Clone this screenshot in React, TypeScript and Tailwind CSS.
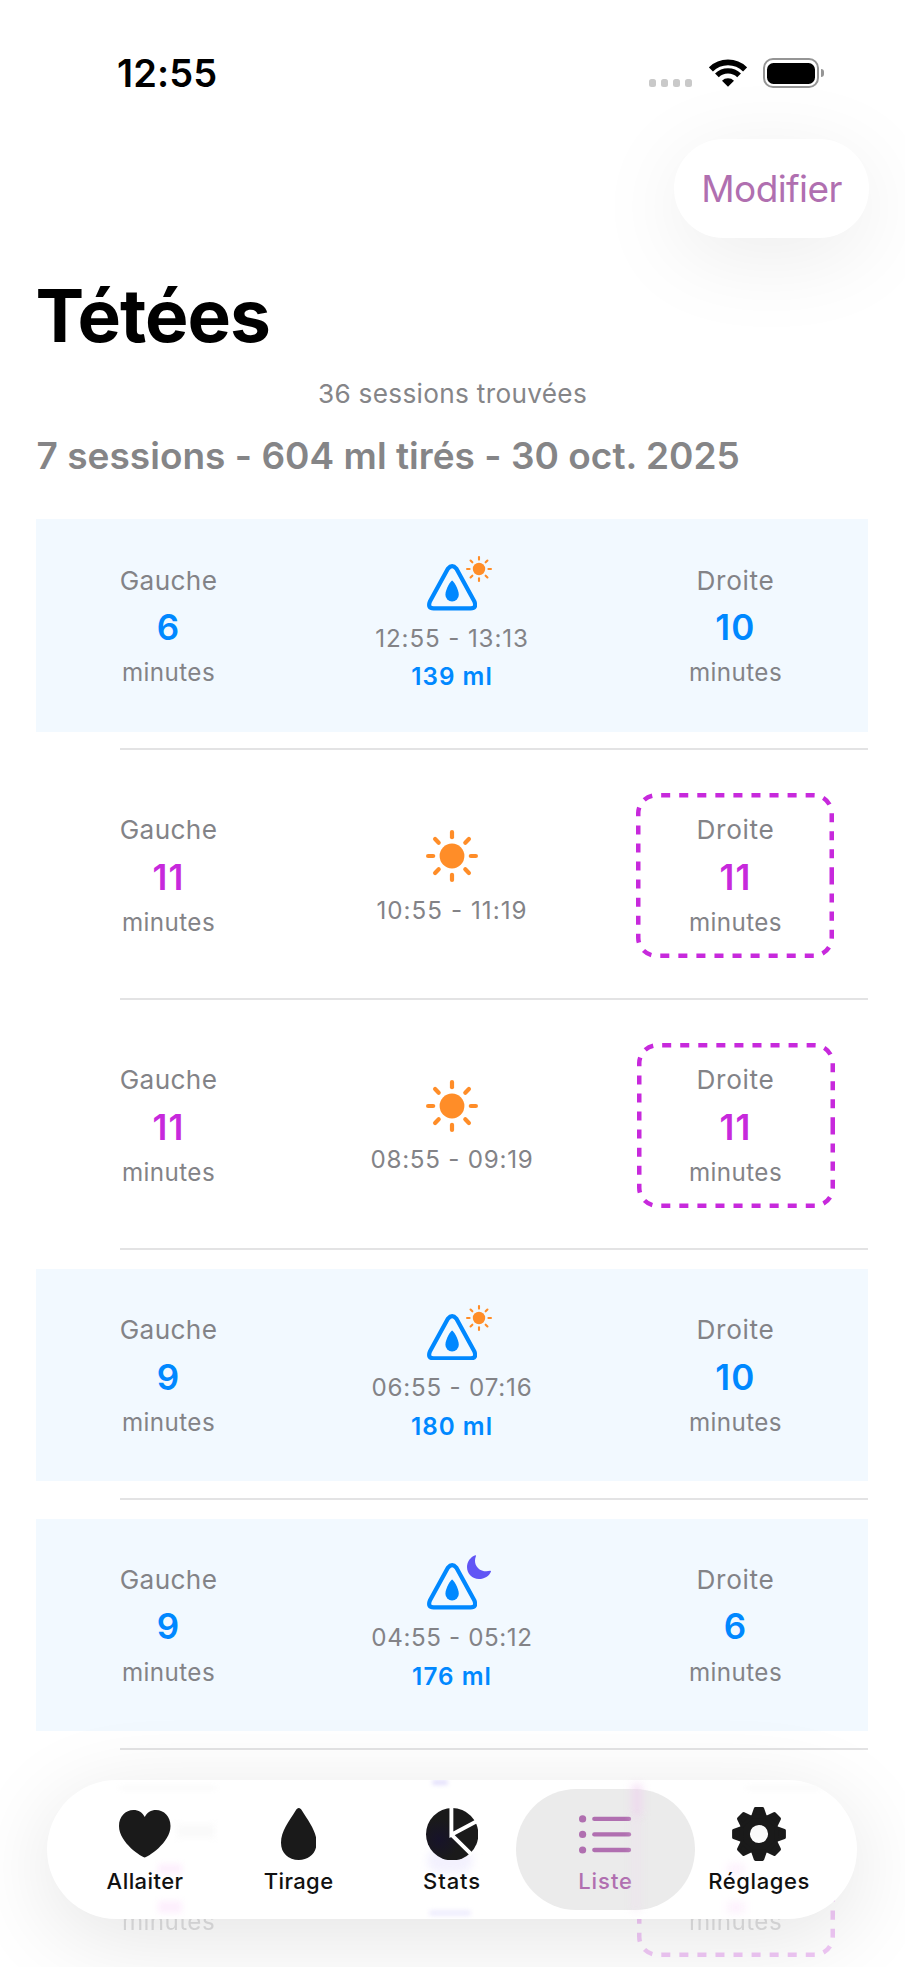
import React from "react";

type Session = {
  left?: number;
  right?: number;
  time?: string;
  tracking?: string;
  volume?: string;
  night?: boolean;
  faded?: boolean;
};

const sessions: Session[] = [
  { left: 6, right: 10, time: "12:55 - 13:13", tracking: "tracking-[0.87px]", volume: "139 ml" },
  { left: 11, right: 11, time: "10:55 - 11:19", tracking: "tracking-[1.03px]" },
  { left: 11, right: 11, time: "08:55 - 09:19", tracking: "tracking-[0.75px]" },
  { left: 9, right: 10, time: "06:55 - 07:16", tracking: "tracking-[0.79px]", volume: "180 ml" },
  { left: 9, right: 6, time: "04:55 - 05:12", tracking: "tracking-[0.6px]", volume: "176 ml", night: true },
  { night: true, faded: true },
];

const RAYS = [0, 45, 90, 135, 180, 225, 270, 315];

function Sun({ className }: { className: string }) {
  return (
    <svg viewBox="-26 -26 52 52" className={className}>
      <circle r="12.4" fill="#ff8d28" />
      {RAYS.map((a) => (
        <line key={a} x1="0" y1="-18.8" x2="0" y2="-23.9" stroke="#ff8d28" strokeWidth="4.2" strokeLinecap="round" transform={`rotate(${a})`} />
      ))}
    </svg>
  );
}

function Moon({ className }: { className: string }) {
  return (
    <svg viewBox="0 0 24 24" className={className}>
      <path
        d="M8.3 0.2C3.4 2 0 6.7 0 12.1C0 18.9 5.2 24 11.9 24C17.5 24 22.2 20.9 23.9 16.7C24.2 16 23.7 15.6 23.1 15.8C18.8 16.9 14.3 16.2 11.2 13.2C7.8 9.9 7.2 5.5 8.9 1.2C9.2 0.4 8.9 0 8.3 0.2Z"
        fill="#6155f5"
      />
    </svg>
  );
}

function PumpTriangle() {
  return (
    <svg viewBox="0 0 50.3 46.5" className="h-[46.5px] w-[50.3px]">
      <path
        d="M21 4.6Q25.15 -0.2 29.3 4.6L47.4 37.6Q50 44.3 43.7 44.3H6.6Q0.3 44.3 2.9 37.6Z"
        fill="none"
        stroke="#0088ff"
        strokeWidth="4.2"
        strokeLinejoin="round"
      />
      <path d="M25.1 16.6C23.9 16.6 18.4 25.5 18.4 30.7A6.7 6.7 0 0 0 31.8 30.7C31.8 25.5 26.3 16.6 25.1 16.6Z" fill="#0088ff" />
    </svg>
  );
}

function DashedFrame() {
  return (
    <svg viewBox="0 0 198 165" className="absolute inset-0 h-[165px] w-[198px]">
      <path
        d="M195.75 82.5V144.75A18 18 0 0 1 177.75 162.75H20.25A18 18 0 0 1 2.25 144.75V20.25A18 18 0 0 1 20.25 2.25H177.75A18 18 0 0 1 195.75 20.25Z"
        fill="none"
        stroke="#c729dc"
        strokeWidth="4.5"
        strokeDasharray="9.03 9.03"
      />
    </svg>
  );
}

function Side({ label, value, pumped, framed }: { label: string; value?: number; pumped: boolean; framed?: boolean }) {
  return (
    <div className="relative flex h-[165px] w-[198px] flex-col items-center pt-[21.5px] text-[#838387]">
      {framed && <DashedFrame />}
      <span className={`h-[32px] text-[26.2px] leading-[32px] ${label === "Droite" ? "tracking-[0.7px]" : "tracking-[0.38px]"}`}>
        {value !== undefined && label}
      </span>
      <span className={`mt-[9.5px] h-[42px] text-[35px] font-semibold leading-[42px] tracking-[1.2px] ${pumped ? "text-[#0088ff]" : "text-[#c729dc]"}`}>
        {value}
      </span>
      <span className="mt-[10.2px] text-[24.2px] leading-[30px] tracking-[0.43px]">minutes</span>
    </div>
  );
}

function SessionRow({ s }: { s: Session }) {
  const pumped = Boolean(s.volume);
  return (
    <li className={`h-[249.85px] pt-[18.7px] ${s.faded ? "opacity-25" : ""}`}>
      <div className={`flex h-[212.5px] items-center justify-between px-[33.5px] ${pumped ? "bg-[#f2f9ff]" : ""}`}>
        <Side label="Gauche" value={s.left} pumped={pumped} />
        <div className={`flex h-[165px] flex-col items-center ${pumped ? "pt-[21px]" : "pt-[37.5px]"}`}>
          {pumped ? (
            <div className="relative">
              <PumpTriangle />
              {s.night ? (
                <Moon className="absolute -top-[8px] left-[40.3px] h-[24px] w-[24px]" />
              ) : (
                <Sun className="absolute -top-[8.5px] left-[39.5px] h-[26px] w-[26px]" />
              )}
            </div>
          ) : s.night ? (
            <Moon className="h-[52px] w-[52px]" />
          ) : (
            <Sun className="h-[52px] w-[52px]" />
          )}
          <span className={`mt-[13.2px] whitespace-nowrap text-[24.2px] leading-[30px] text-[#838387] ${s.tracking ?? ""}`}>{s.time}</span>
          {pumped && <span className="mt-[8.5px] text-[24.2px] font-semibold leading-[30px] tracking-[1.05px] text-[#0088ff]">{s.volume}</span>}
        </div>
        <Side label="Droite" value={s.right} pumped={pumped} framed={!pumped} />
      </div>
      <div className="ml-[84px] mt-[16.5px] h-[2px] bg-[#e3e3e4]" />
    </li>
  );
}

function StatusBar() {
  return (
    <div className="flex h-[139px] items-start justify-between pl-[117px] pr-[81px] pt-[53.4px]">
      <span className="text-[38px] font-semibold leading-[40px] tracking-[0.1px]">12:55</span>
      <div className="mt-[5.1px] flex h-[29.5px] items-end">
        <div className="mb-[1px] mr-[16.5px] flex gap-[4.4px]">
          {[0, 1, 2, 3].map((i) => (
            <span key={i} className="h-[7.5px] w-[7.5px] rounded-[2.5px] bg-[#c9c9c9]" />
          ))}
        </div>
        <svg viewBox="-19 -27.7 38 27.7" className="mb-[1px] mr-[16.5px] h-[27.7px] w-[38px]">
          <path d="M-17.1 -17.3A24.5 24.5 0 0 1 17.1 -17.3" fill="none" stroke="#000" strokeWidth="5.8" />
          <path d="M-11.1 -11.3A16 16 0 0 1 11.1 -11.3" fill="none" stroke="#000" strokeWidth="5.4" />
          <path d="M0 0L-6 -6A8.6 8.6 0 0 1 6 -6Z" fill="#000" />
        </svg>
        <div className="flex items-center">
          <div className="h-[29.5px] w-[56px] rounded-[10px] border-2 border-[#959595] p-[2.3px]">
            <div className="h-full w-full rounded-[6.5px] bg-black" />
          </div>
          <div className="ml-[2px] h-[8px] w-[3px] rounded-r-full bg-[#959595]" />
        </div>
      </div>
    </div>
  );
}

function HeartIcon() {
  return (
    <svg viewBox="0 0 51.5 47.5" className="h-[47.5px] w-[51.5px]" fill="#1a1a1a">
      <path d="M25.75 47.5C23.5 47.5 0 33 0 16C0 6.5 6.5 0 14.5 0C19.5 0 23.5 2.6 25.75 7C28 2.6 32 0 37 0C45 0 51.5 6.5 51.5 16C51.5 33 28 47.5 25.75 47.5Z" />
    </svg>
  );
}

function DropIcon() {
  return (
    <svg viewBox="0 0 35.6 52" className="h-[52px] w-[35.6px]" fill="#1a1a1a">
      <path d="M17.8 0C16.4 0 15.7 1 15 2.1C8 13.2 0 23.5 0 34.7C0 45.2 7.5 52 17.8 52C28.1 52 35.6 45.2 35.6 34.7C35.6 23.5 27.6 13.2 20.6 2.1C19.9 1 19.2 0 17.8 0Z" />
    </svg>
  );
}

function PieIcon() {
  return (
    <svg viewBox="-26.2 -26.2 52.4 52.4" className="h-[52.4px] w-[52.4px]">
      <defs>
        <radialGradient id="pie" cx="0.25" cy="0.6" r="0.4">
          <stop offset="0" stopColor="#17132a" />
          <stop offset="1" stopColor="#1a1a1a" />
        </radialGradient>
      </defs>
      <circle r="26.2" fill="url(#pie)" />
      <path d="M-0.8 -28V0.5L25.5 -13.5M-0.8 0.5L19.5 20.5" fill="none" stroke="#fff" strokeWidth="3.9" />
    </svg>
  );
}

function ListIcon() {
  return (
    <svg viewBox="0 0 52.4 39" className="h-[39px] w-[52.4px]">
      {[3.9, 19.4, 35].map((y) => (
        <g key={y}>
          <circle cx="3.6" cy={y} r="3.6" fill="#b06fb0" />
          <line x1="15.3" y1={y} x2="50" y2={y} stroke="#b06fb0" strokeWidth="4.3" strokeLinecap="round" />
        </g>
      ))}
    </svg>
  );
}

function GearIcon() {
  return (
    <svg viewBox="-27 -27 54 54" className="h-[54px] w-[54px]">
      <circle r="14.5" fill="none" stroke="#1a1a1a" strokeWidth="10.8" />
      {RAYS.map((a) => (
        <path key={a} d="M-6.2 -17.5L-3.5 -25.2H3.5L6.2 -17.5Z" fill="#1a1a1a" stroke="#1a1a1a" strokeWidth="3.4" strokeLinejoin="round" transform={`rotate(${a})`} />
      ))}
    </svg>
  );
}

const tabs = [
  { label: "Allaiter", tracking: "tracking-[0.44px]", icon: <HeartIcon /> },
  { label: "Tirage", tracking: "tracking-[0.4px]", icon: <DropIcon /> },
  { label: "Stats", tracking: "tracking-[0.9px]", icon: <PieIcon /> },
  { label: "Liste", tracking: "tracking-[0.95px]", icon: <ListIcon />, active: true },
  { label: "Réglages", tracking: "tracking-[0.57px]", icon: <GearIcon /> },
];

function GlassTints() {
  return (
    <div className="pointer-events-none absolute inset-0 overflow-hidden rounded-[70px]">
      <div className="absolute left-[73px] top-[6px] h-[4px] w-[96px] bg-[#fafafa] blur-[2px]" />
      <div className="absolute left-[130px] top-[44px] h-[14px] w-[38px] bg-[#fafafa] blur-[3px]" />
      <div className="absolute left-[111px] top-[84px] h-[10px] w-[24px] bg-[#fdeffd] blur-[3px]" />
      <div className="absolute left-[111px] top-[121px] h-[12px] w-[24px] bg-[#fdeffd] blur-[3px]" />
      <div className="absolute left-[385px] top-0 h-[5px] w-[16px] rounded-full bg-[#e3dffc] blur-[2px]" />
      <div className="absolute left-[380px] top-[68px] h-[25px] w-[46px] rounded-full bg-[#f3f1fe] blur-[4px]" />
      <div className="absolute left-[382px] top-[130px] h-[6px] w-[42px] rounded-full bg-[#efedfd] blur-[2px]" />
      <div className="absolute left-[700px] top-[6px] h-[4px] w-[74px] bg-[#fafafa] blur-[2px]" />
      <div className="absolute left-[702px] top-[40px] h-[20px] w-[20px] bg-[#fafafa] blur-[3px]" />
      <div className="absolute left-[680px] top-[84px] h-[10px] w-[18px] bg-[#fdf1fd] blur-[4px]" />
      <div className="absolute left-[680px] top-[122px] h-[11px] w-[18px] bg-[#fdf1fd] blur-[4px]" />
    </div>
  );
}

function TabBar() {
  return (
    <nav className="absolute bottom-[47.7px] left-[47px] h-[139.6px] w-[810.2px] rounded-[70px] bg-white shadow-[0_18px_90px_rgba(0,0,0,0.11)]">
      <GlassTints />
      <div className="relative flex h-full items-center justify-center">
        {tabs.map((t) => (
          <div
            key={t.label}
            className={`-mx-[12.75px] flex h-[121px] w-[179px] flex-col items-center rounded-[61px] pt-[18px] ${t.active ? "bg-[#ebebeb] text-[#b06fb0]" : "text-[#111111]"}`}
          >
            <div className="flex h-[54px] items-center justify-center">{t.icon}</div>
            <span className={`mt-[6.3px] text-[22px] font-medium leading-[28px] ${t.tracking}`}>{t.label}</span>
          </div>
        ))}
      </div>
      <div className="pointer-events-none absolute left-[585px] top-[4px] h-[32px] w-[10px] bg-[#f0cdf0]/60 blur-[4px]" />
      <div className="pointer-events-none absolute left-[585px] top-[36px] h-[96px] w-[8px] bg-[#f0dcf0]/40 blur-[4px]" />
    </nav>
  );
}

export default function App() {
  return (
    <main className="relative h-[1967px] w-full overflow-hidden bg-white font-['Inter','Liberation_Sans',sans-serif] text-black">
      <StatusBar />
      <div className="flex justify-end pr-[36px]">
        <button className="flex h-[99.4px] w-[195px] items-center justify-center rounded-full bg-white pt-[1px] text-[37px] tracking-[-0.62px] text-[#b06fb0] shadow-[0_18px_90px_rgba(0,0,0,0.08)]">
          Modifier
        </button>
      </div>
      <h1 className="mt-[37.4px] pl-[35.5px] text-[73px] font-bold leading-[80px] tracking-[-1px]">Tétées</h1>
      <p className="mt-[22.4px] text-center text-[26.2px] leading-[32px] tracking-[0.31px] text-[#858588]">36 sessions trouvées</p>
      <h2 className="mt-[24px] pl-[36.5px] text-[37px] font-semibold leading-[44px] tracking-[0.03px] text-[#858587]">
        7 sessions - 604 ml tirés - 30 oct. 2025
      </h2>
      <ul className="mt-[22.4px] pl-[36px] pr-[37px]">
        {sessions.map((s, i) => (
          <SessionRow key={i} s={s} />
        ))}
      </ul>
      <TabBar />
    </main>
  );
}
